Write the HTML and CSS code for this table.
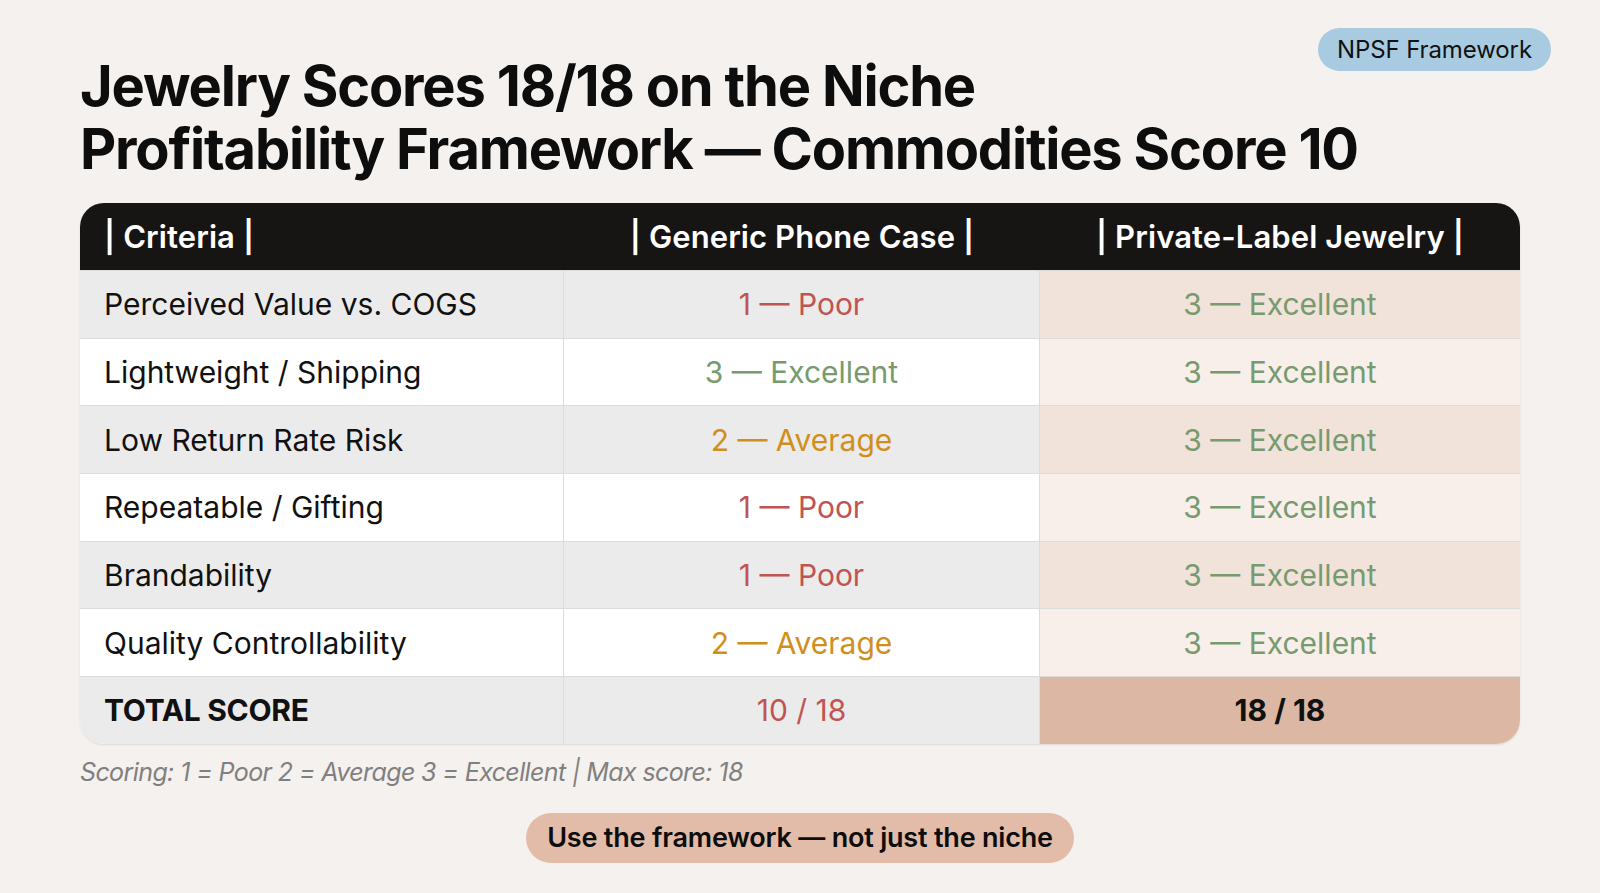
FILE: index.html
```html
<!DOCTYPE html>
<html lang="en">
<head>
<meta charset="utf-8">
<title>NPSF Framework</title>
<link rel="stylesheet" href="styles.css">
</head>
<body>
<div class="page">
  <div class="badge">NPSF Framework</div>
  <h1 class="title">Jewelry Scores 18/18 on the Niche<br>Profitability Framework — Commodities Score 10</h1>
  <div class="table">
    <div class="row head">
      <div class="cell c1">| Criteria |</div>
      <div class="cell c2">| Generic Phone Case |</div>
      <div class="cell c3">| Private-Label Jewelry |</div>
    </div>
    <div class="row odd">
      <div class="cell c1">Perceived Value vs. COGS</div>
      <div class="cell c2 poor">1 — Poor</div>
      <div class="cell c3 exc">3 — Excellent</div>
    </div>
    <div class="row even">
      <div class="cell c1">Lightweight / Shipping</div>
      <div class="cell c2 exc">3 — Excellent</div>
      <div class="cell c3 exc">3 — Excellent</div>
    </div>
    <div class="row odd">
      <div class="cell c1">Low Return Rate Risk</div>
      <div class="cell c2 avg">2 — Average</div>
      <div class="cell c3 exc">3 — Excellent</div>
    </div>
    <div class="row even">
      <div class="cell c1">Repeatable / Gifting</div>
      <div class="cell c2 poor">1 — Poor</div>
      <div class="cell c3 exc">3 — Excellent</div>
    </div>
    <div class="row odd">
      <div class="cell c1">Brandability</div>
      <div class="cell c2 poor">1 — Poor</div>
      <div class="cell c3 exc">3 — Excellent</div>
    </div>
    <div class="row even">
      <div class="cell c1">Quality Controllability</div>
      <div class="cell c2 avg">2 — Average</div>
      <div class="cell c3 exc">3 — Excellent</div>
    </div>
    <div class="row total">
      <div class="cell c1">TOTAL SCORE</div>
      <div class="cell c2 poor">10 / 18</div>
      <div class="cell c3">18 / 18</div>
    </div>
  </div>
  <p class="note">Scoring: 1 = Poor 2 = Average 3 = Excellent | Max score: 18</p>
  <div class="cta-wrap"><div class="cta">Use the framework — not just the niche</div></div>
</div>
</body>
</html>
```

FILE: styles.css
```css
* { box-sizing: border-box; }
html, body { margin: 0; padding: 0; }
body {
  background: #f5f1ee;
  font-family: "Inter", "Liberation Sans", sans-serif;
  color: #111;
  width: 1600px;
  height: 893px;
  overflow: hidden;
}
.page {
  position: relative;
  padding: 55px 80px 0 80px;
}
.badge {
  position: absolute;
  top: 28px;
  right: 49px;
  height: 43px;
  padding: 0 19px;
  border-radius: 22px;
  background: #a9cbe1;
  color: #111;
  font-size: 24px;
  line-height: 43px;
  letter-spacing: -0.1px;
}
.title {
  margin: 0;
  font-size: 56px;
  line-height: 63px;
  font-weight: 700;
  letter-spacing: -1.2px;
  color: #0d0d0d;
}
.table {
  margin-top: 22px;
  width: 1440px;
  border-radius: 24px;
  overflow: hidden;
  background: #fff;
  box-shadow: 0 1px 2px rgba(0,0,0,0.10);
}
.row {
  display: grid;
  grid-template-columns: 484px 476px 480px;
  height: 67.7px;
  border-top: 1px solid #dcdcdc;
}
.row.head { border-top: none; background: #161514; height: 67px; }
.cell {
  display: flex;
  align-items: center;
  justify-content: center;
  font-size: 30px;
  letter-spacing: 0;
}
.cell.c1 { justify-content: flex-start; padding-left: 24px; border-right: 1px solid #dcdcdc; }
.cell.c2 { border-right: 1px solid #dcdcdc; }
.head .cell { color: #fff; font-weight: 600; border-right: none; font-size: 31px; letter-spacing: 0.1px; }
.odd .c1, .odd .c2 { background: #ebebeb; }
.even .c1, .even .c2 { background: #ffffff; }
.odd .c3 { background: #f1e3da; }
.even .c3 { background: #f8efea; }
.total .c1, .total .c2 { background: #ebebeb; }
.total .c1 { font-weight: 700; letter-spacing: -0.3px; }
.total .c3 { background: #dcb7a4; font-weight: 700; }
.poor { color: #c05452; }
.exc { color: #779a6f; }
.avg { color: #d08f1c; }
.note {
  margin: 10px 0 0 0;
  font-size: 25px;
  font-style: italic;
  color: #808080;
  letter-spacing: -0.6px;
  line-height: 36px;
}
.cta-wrap {
  display: flex;
  justify-content: center;
  margin-top: 23px;
}
.cta {
  height: 50px;
  padding: 0 21px;
  border-radius: 25px;
  background: #e2bca8;
  font-size: 27px;
  font-weight: 600;
  line-height: 50px;
  letter-spacing: -0.2px;
  color: #0d0d0d;
}
```
